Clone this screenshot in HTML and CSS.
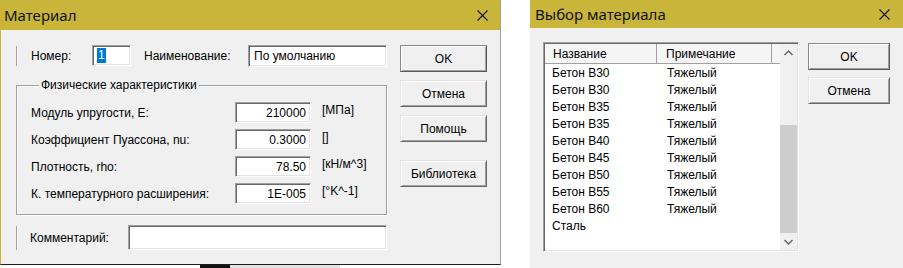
FILE: index.html
```html
<!doctype html>
<html>
<head>
<meta charset="utf-8">
<title>Материал</title>
<link rel="stylesheet" href="styles.css">
</head>
<body>
<div class="desk">
  <div class="leftcol">
    <div class="dlg dlg-mat">
      <div class="caption cap-mat">
        <span>Материал</span>
        <svg class="close" width="11" height="11" viewBox="0 0 11 11"><path d="M0.5 0.5 L10.5 10.5 M10.5 0.5 L0.5 10.5" stroke="#111" stroke-width="1.1" fill="none"/></svg>
      </div>
      <div class="client">
        <div class="mainpane">
          <div class="line">
            <span class="sep"></span>
            <span class="lbl w-num">Номер:</span>
            <span class="edit e-num"><span class="sel">1</span></span>
            <span class="lbl w-name">Наименование:</span>
            <span class="edit e-name">По умолчанию</span>
          </div>
          <fieldset class="group">
            <legend>Физические характеристики</legend>
            <div class="props">
              <span class="lbl">Модуль упругости, E:</span>
              <span class="edit num">210000</span>
              <span class="unit">[МПа]</span>
              <span class="lbl">Коэффициент Пуассона, nu:</span>
              <span class="edit num">0.3000</span>
              <span class="unit">[]</span>
              <span class="lbl">Плотность, rho:</span>
              <span class="edit num">78.50</span>
              <span class="unit">[кН/м^3]</span>
              <span class="lbl">К. температурного расширения:</span>
              <span class="edit num">1E-005</span>
              <span class="unit">[°K^-1]</span>
            </div>
          </fieldset>
          <div class="line comment">
            <span class="sep tall"></span>
            <span class="lbl w-com">Комментарий:</span>
            <span class="edit e-com"></span>
          </div>
        </div>
        <div class="btns">
          <div class="btn def">OK</div>
          <div class="btn">Отмена</div>
          <div class="btn">Помощь</div>
          <div class="btn gap">Библиотека</div>
        </div>
      </div>
    </div>
    <div class="under">
      <span class="u-blank"></span>
      <span class="u-dark"></span>
      <span class="u-text"></span>
    </div>
  </div>

  <div class="dlg dlg-pick">
    <div class="caption cap-pick">
      <span>Выбор материала</span>
      <svg class="close" width="11" height="11" viewBox="0 0 11 11"><path d="M0.5 0.5 L10.5 10.5 M10.5 0.5 L0.5 10.5" stroke="#111" stroke-width="1.1" fill="none"/></svg>
    </div>
    <div class="client">
      <div class="listbox">
        <div class="listview">
          <div class="hdr">
            <span class="hcell c1">Название</span>
            <span class="hcell c2">Примечание</span>
            <span class="hcell c3"></span>
          </div>
          <div class="row"><span class="c1">Бетон B30</span><span class="c2">Тяжелый</span></div>
          <div class="row"><span class="c1">Бетон B30</span><span class="c2">Тяжелый</span></div>
          <div class="row"><span class="c1">Бетон B35</span><span class="c2">Тяжелый</span></div>
          <div class="row"><span class="c1">Бетон B35</span><span class="c2">Тяжелый</span></div>
          <div class="row"><span class="c1">Бетон B40</span><span class="c2">Тяжелый</span></div>
          <div class="row"><span class="c1">Бетон B45</span><span class="c2">Тяжелый</span></div>
          <div class="row"><span class="c1">Бетон B50</span><span class="c2">Тяжелый</span></div>
          <div class="row"><span class="c1">Бетон B55</span><span class="c2">Тяжелый</span></div>
          <div class="row"><span class="c1">Бетон B60</span><span class="c2">Тяжелый</span></div>
          <div class="row"><span class="c1">Сталь</span><span class="c2"></span></div>
        </div>
        <div class="vscroll">
          <div class="arrow">
            <svg width="9" height="6" viewBox="0 0 9 6"><path d="M0.5 5 L4.5 1 L8.5 5" stroke="#606060" stroke-width="1.4" fill="none"/></svg>
          </div>
          <div class="track"></div>
          <div class="thumb"></div>
          <div class="arrow">
            <svg width="9" height="6" viewBox="0 0 9 6"><path d="M0.5 1 L4.5 5 L8.5 1" stroke="#606060" stroke-width="1.4" fill="none"/></svg>
          </div>
        </div>
      </div>
      <div class="btns narrow">
        <div class="btn def">OK</div>
        <div class="btn">Отмена</div>
      </div>
    </div>
  </div>
</div>
</body>
</html>
```

FILE: styles.css
```css
* {
  box-sizing: border-box;
}

body {
  margin: 0;
  background: #fff;
  font-family: "Liberation Sans", Arial, sans-serif;
  font-size: 12px;
  color: #000;
}

.desk {
  display: flex;
  align-items: flex-start;
  gap: 29px;
  width: 903px;
  height: 268px;
  overflow: hidden;
}

/* window frames */
.dlg {
  background: #f0f0f0;
  display: flex;
  flex-direction: column;
}

.dlg-mat {
  width: 501px;
  height: 265px;
  border-left: 1px solid #c9b53a;
  border-right: 1px solid #9c9c9c;
  border-bottom: 1px solid #1e1e1e;
}

.dlg-pick {
  width: 374px;
  height: 268px;
}

.caption {
  background: #c9b53a;
  display: flex;
  align-items: center;
  justify-content: space-between;
  font-family: "Noto Sans", sans-serif;
  font-size: 15px;
  color: #111;
}

.cap-mat {
  height: 30px;
  padding: 0 12px 0 3px;
}

.cap-pick {
  height: 28px;
  padding: 0 13px 0 5px;
}

.client {
  display: flex;
  align-items: flex-start;
}

.dlg-mat .client {
  padding: 15px 0 0 15px;
}

.dlg-pick .client {
  padding: 14px 0 0 13px;
}

/* left dialog */
.mainpane {
  width: 371px;
}

.line {
  display: flex;
  align-items: center;
  height: 21px;
}

.sep {
  width: 2px;
  height: 20px;
  border-left: 1px solid #a0a0a0;
  border-right: 1px solid #fff;
}

.sep.tall {
  height: 24px;
}

.lbl {
  white-space: nowrap;
}

.w-num {
  width: 61px;
  margin-left: 13px;
}

.w-name {
  width: 104px;
  margin-left: 13px;
}

.w-com {
  width: 98px;
  margin-left: 12px;
}

.edit {
  display: flex;
  align-items: center;
  height: 21px;
  background: #fff;
  border: 1px solid;
  border-color: #a0a0a0 #fff #fff #a0a0a0;
  box-shadow: inset 1px 1px 0 #696969, inset -1px -1px 0 #e3e3e3;
  padding: 0 4px;
  white-space: nowrap;
}

.e-num {
  width: 39px;
  padding-left: 4px;
}

.sel {
  background: #0078d7;
  color: #fff;
  padding: 0 1px;
  line-height: 15px;
}

.e-name {
  width: 139px;
  height: 22px;
  padding-left: 5px;
}

.group {
  margin: 12px 0 0;
  padding: 10px 0 10px 14px;
  border: 1px solid #a0a0a0;
  box-shadow: inset 1px 1px 0 #fff, 1px 1px 0 #fff;
}

.group legend {
  margin-left: 8px;
  padding: 0 2px;
  line-height: 14px;
}

.props {
  display: grid;
  grid-template-columns: 204px 76px auto;
  grid-auto-rows: 21px;
  row-gap: 6px;
  align-items: center;
}

.num {
  justify-content: flex-end;
  padding-right: 4px;
}

.unit {
  margin-left: 11px;
  align-self: start;
  padding-top: 1px;
}

.comment {
  margin-top: 10px;
  height: 25px;
}

.e-com {
  width: 259px;
  height: 25px;
}

.btns {
  display: flex;
  flex-direction: column;
  gap: 8px;
  width: 87px;
  margin-left: 13px;
}

.btns.narrow {
  width: 82px;
  margin-left: 9px;
  margin-top: 1px;
  gap: 7px;
}

.btn {
  height: 27px;
  display: flex;
  align-items: center;
  justify-content: center;
  background: #f0f0f0;
  border: 1px solid;
  border-color: #e3e3e3 #696969 #696969 #e3e3e3;
  box-shadow: inset 1px 1px 0 #fff, inset -1px -1px 0 #a0a0a0;
}

.btn.def {
  border-color: #8a8a8a #5a5a5a #5a5a5a #8a8a8a;
}

.btn.gap {
  margin-top: 10px;
}

.under {
  display: flex;
  height: 3px;
}

.u-blank {
  width: 200px;
}

.u-dark {
  width: 30px;
  background: #111;
}

.u-text {
  width: 110px;
  background: #e2e2e2;
}

/* right dialog */
.listbox {
  display: flex;
  width: 256px;
  height: 210px;
  background: #fff;
  border: 1px solid;
  border-color: #a0a0a0 #fff #fff #a0a0a0;
  box-shadow: inset 1px 1px 0 #696969, inset -1px -1px 0 #e3e3e3;
  padding: 1px;
}

.listview {
  width: 235px;
}

.hdr {
  display: flex;
  height: 20px;
  background: #f5f5f5;
  border-bottom: 1px solid #a0a0a0;
}

.hcell {
  display: flex;
  align-items: center;
  border-right: 1px solid #a0a0a0;
}

.hdr .c1 {
  width: 112px;
  padding-left: 8px;
}

.hdr .c2 {
  width: 115px;
  padding-left: 9px;
}

.hdr .c3 {
  flex: 1;
  border-right: 0;
}

.row {
  display: flex;
  align-items: center;
  height: 17px;
}

.row .c1 {
  width: 112px;
  padding-left: 7px;
}

.row .c2 {
  padding-left: 10px;
}

.vscroll {
  width: 17px;
  display: flex;
  flex-direction: column;
  background: #f0f0f0;
}

.arrow {
  height: 17px;
  display: flex;
  align-items: center;
  justify-content: center;
}

.track {
  height: 64px;
}

.thumb {
  height: 108px;
  background: #cdcdcd;
}
```
